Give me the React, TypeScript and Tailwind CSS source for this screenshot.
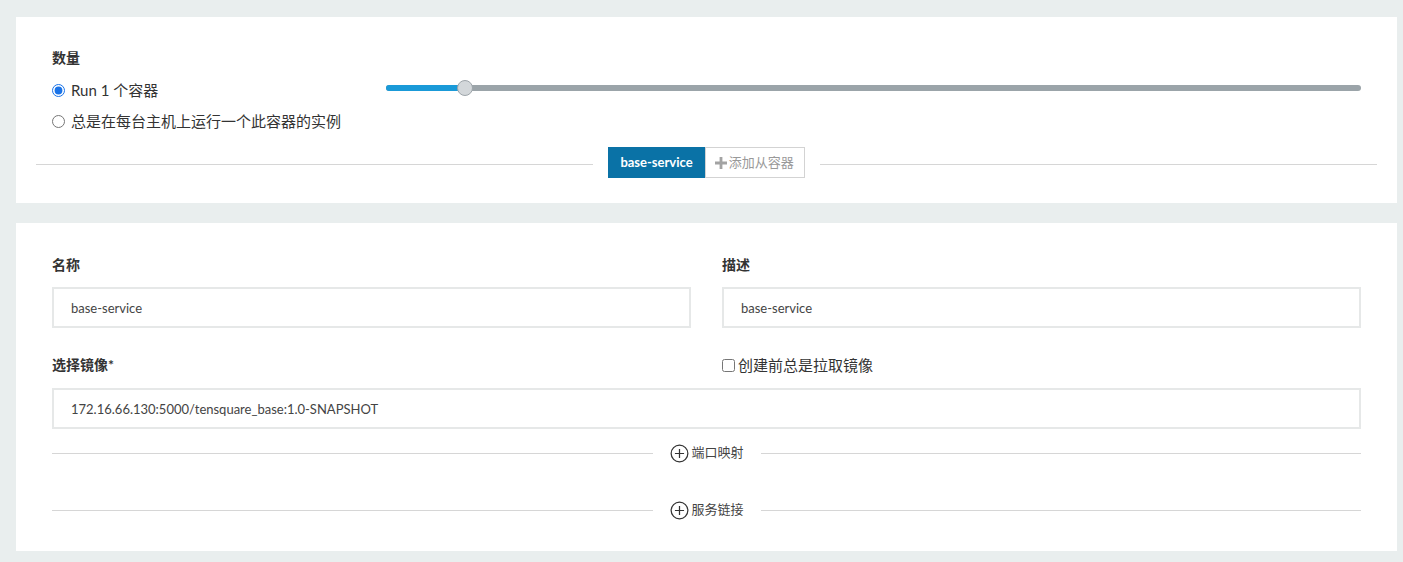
import { useState } from 'react'

const FONT = "font-['Lato','Noto_Sans_CJK_SC',sans-serif]"

function Field({ label, value }: { label: string; value: string }) {
  return (
    <div>
      <div className="h-5 text-[14px] font-bold leading-5 text-[#333]">{label}</div>
      <input
        readOnly
        value={value}
        className="mt-3 h-[41px] w-full border-2 border-[#e6e8e8] bg-white px-[17px] text-[13px] text-[#444] outline-none"
      />
    </div>
  )
}

function PlusCircle() {
  return (
    <svg width="19" height="19" viewBox="0 0 20 20" fill="none" stroke="#333" strokeWidth="1.3">
      <circle cx="10" cy="10" r="8.8" />
      <path d="M10 5.2v9.6M5.2 10h9.6" />
    </svg>
  )
}

function AddDivider({ label }: { label: string }) {
  return (
    <div className="flex h-5 items-center">
      <div className="h-px flex-1 bg-[#d6d6d6]" />
      <button className="mx-[17px] flex items-center gap-[3px] text-[13px] text-[#444]">
        <PlusCircle />
        <span>{label}</span>
      </button>
      <div className="h-px flex-1 bg-[#d6d6d6]" />
    </div>
  )
}

export default function App() {
  const [mode, setMode] = useState<'run' | 'global'>('run')
  const [pull, setPull] = useState(false)

  return (
    <div className={`${FONT} min-h-screen bg-[#e9eeee] pb-3 pl-4 pr-[6px] pt-[17px]`}>
      <section className="h-[186px] bg-white px-5 pt-[31px]">
        <div className="flex px-4">
          <div className="w-[334px]">
            <div className="h-5 text-[14px] font-bold leading-5 text-[#333]">数量</div>
            <div className="mt-[7px]">
              <label className="flex h-[31px] items-center gap-[6px] text-[15px] text-[#333]">
                <input
                  type="radio"
                  checked={mode === 'run'}
                  onChange={() => setMode('run')}
                  className="m-0 h-[13px] w-[13px] accent-[#1a73e8]"
                />
                Run 1 个容器
              </label>
              <label className="flex h-[31px] items-center gap-[6px] text-[15px] text-[#333]">
                <input
                  type="radio"
                  checked={mode === 'global'}
                  onChange={() => setMode('global')}
                  className="m-0 h-[13px] w-[13px] accent-[#1a73e8]"
                />
                总是在每台主机上运行一个此容器的实例
              </label>
            </div>
          </div>
          <div className="flex-1 pt-[37px]">
            <div className="relative h-[6px] rounded-full bg-[#9ba4a9]">
              <div className="h-full w-[79px] rounded-full bg-[#1a9ad8]" />
              <div className="absolute left-[71px] top-[-5px] h-4 w-4 rounded-full border border-[#9ea5aa] bg-[#d3d7da]" />
            </div>
          </div>
        </div>
        <div className="mt-[10px] flex h-[31px] items-center">
          <div className="mt-[3px] h-px flex-1 bg-[#d6d6d6]" />
          <div className="mx-[15px] flex h-[31px]">
            <div className="flex items-center bg-[#0a72a6] px-3 text-[13px] font-bold text-white">base-service</div>
            <div className="flex items-center gap-[2px] border border-[#d3d3d3] pl-[9px] pr-[10px] text-[13px] text-[#999]">
              <svg width="12" height="12" viewBox="0 0 12 12" fill="#a3a3a3">
                <path d="M4.6 0h2.8v4.6H12v2.8H7.4V12H4.6V7.4H0V4.6h4.6z" />
              </svg>
              添加从容器
            </div>
          </div>
          <div className="mt-[3px] h-px flex-1 bg-[#d6d6d6]" />
        </div>
      </section>

      <section className="mt-5 h-[328px] bg-white px-9 pt-8">
        <div className="grid grid-cols-2 gap-x-[31px]">
          <Field label="名称" value="base-service" />
          <Field label="描述" value="base-service" />
        </div>
        <div className="mt-[27px] grid grid-cols-2 gap-x-[31px]">
          <div className="h-5 text-[14px] font-bold leading-5 text-[#333]">选择镜像*</div>
          <label className="flex h-5 items-center gap-[3px] text-[15px] text-[#333]">
            <input
              type="checkbox"
              checked={pull}
              onChange={(e) => setPull(e.target.checked)}
              className="m-0 h-[13px] w-[13px]"
            />
            创建前总是拉取镜像
          </label>
        </div>
        <input
          readOnly
          value="172.16.66.130:5000/tensquare_base:1.0-SNAPSHOT"
          className="mt-[13px] h-[41px] w-full border-2 border-[#e6e8e8] bg-white px-[17px] text-[13px] text-[#444] outline-none"
        />
        <div className="mt-[14px]">
          <AddDivider label="端口映射" />
        </div>
        <div className="mt-[37px]">
          <AddDivider label="服务链接" />
        </div>
      </section>
    </div>
  )
}
